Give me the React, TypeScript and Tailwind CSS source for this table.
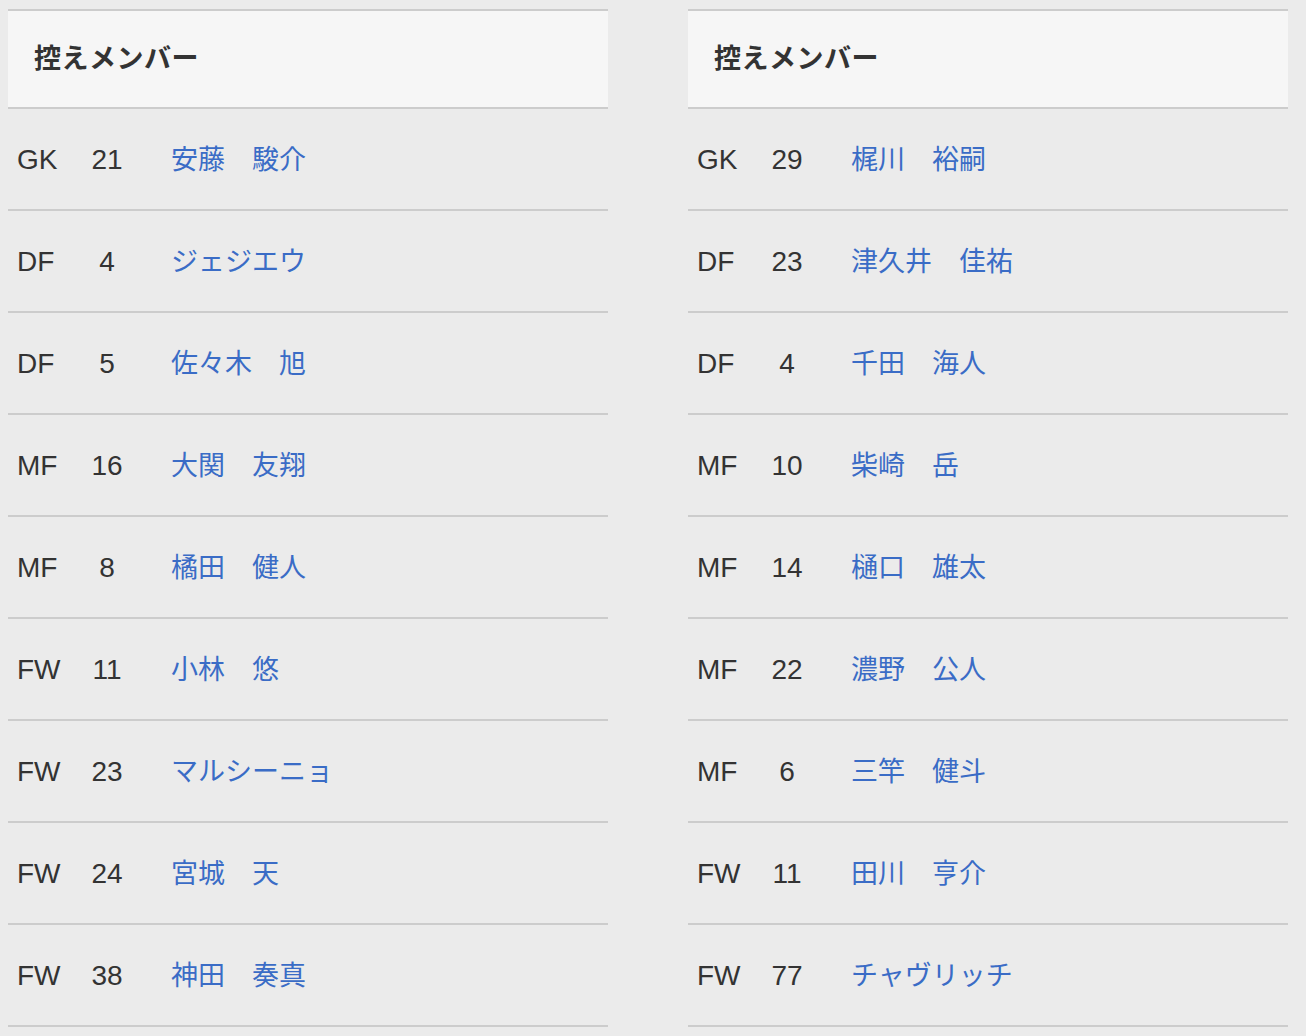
// Substitute members (控えメンバー) - two side-by-side bench lists

type Player = { pos: string; no: string; name: string };

const home: Player[] = [
    { pos: 'GK', no: '21', name: '安藤　駿介' },
    { pos: 'DF', no: '4', name: 'ジェジエウ' },
    { pos: 'DF', no: '5', name: '佐々木　旭' },
    { pos: 'MF', no: '16', name: '大関　友翔' },
    { pos: 'MF', no: '8', name: '橘田　健人' },
    { pos: 'FW', no: '11', name: '小林　悠' },
    { pos: 'FW', no: '23', name: 'マルシーニョ' },
    { pos: 'FW', no: '24', name: '宮城　天' },
    { pos: 'FW', no: '38', name: '神田　奏真' },
];

const away: Player[] = [
    { pos: 'GK', no: '29', name: '梶川　裕嗣' },
    { pos: 'DF', no: '23', name: '津久井　佳祐' },
    { pos: 'DF', no: '4', name: '千田　海人' },
    { pos: 'MF', no: '10', name: '柴崎　岳' },
    { pos: 'MF', no: '14', name: '樋口　雄太' },
    { pos: 'MF', no: '22', name: '濃野　公人' },
    { pos: 'MF', no: '6', name: '三竿　健斗' },
    { pos: 'FW', no: '11', name: '田川　亨介' },
    { pos: 'FW', no: '77', name: 'チャヴリッチ' },
];

function BenchTable({ players }: { players: Player[] }) {
    return (
        <div className="w-[600px] shrink-0">
            {/* Header */}
            <div className="h-[100px] border-y-2 border-[#cccccc] bg-[#f6f6f6] flex items-center pl-[26px]">
                <h3 className="text-[27px] font-bold text-[#333333] leading-none tracking-[0.5px]">控えメンバー</h3>
            </div>

            {/* Rows */}
            {players.map((p, i) => (
                <div
                    key={i}
                    className="h-[102px] border-b-2 border-[#cccccc] flex items-center leading-none pt-[2px]"
                >
                    <span className="w-[64px] pl-[9px] text-[28px] text-[#333333]">{p.pos}</span>
                    <span className="w-[70px] text-center text-[28px] text-[#333333]">{p.no}</span>
                    <a href="#" className="ml-[29px] text-[27px] text-[#3a6cc6]">
                        {p.name}
                    </a>
                </div>
            ))}
        </div>
    );
}

export default function App() {
    return (
        <div
            className="min-h-[1036px] bg-[#ebebeb] pt-[9px] px-[8px] flex gap-[80px]"
            style={{ fontFamily: '"Liberation Sans", "Noto Sans CJK JP", sans-serif' }}
        >
            <BenchTable players={home} />
            <BenchTable players={away} />
        </div>
    );
}
